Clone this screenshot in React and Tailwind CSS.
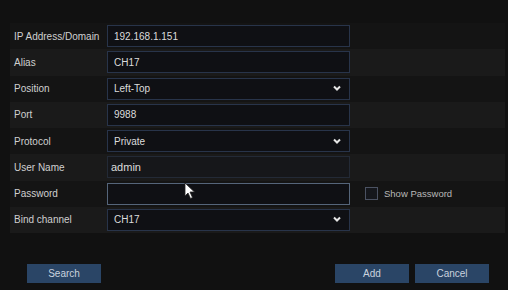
import React from 'react';

const rows = [
  { label: 'IP Address/Domain', value: '192.168.1.151', type: 'text' },
  { label: 'Alias', value: 'CH17', type: 'text' },
  { label: 'Position', value: 'Left-Top', type: 'select' },
  { label: 'Port', value: '9988', type: 'text' },
  { label: 'Protocol', value: 'Private', type: 'select' },
  { label: 'User Name', value: 'admin', type: 'plain' },
  { label: 'Password', value: '', type: 'password' },
  { label: 'Bind channel', value: 'CH17', type: 'select' },
];

const Chevron = () => (
  <svg width="10" height="7" viewBox="0 0 10 7" className="ml-auto mr-[7px]">
    <path d="M2 1.5 L5 4.5 L8 1.5" stroke="#e6e6e6" strokeWidth="2" fill="none" />
  </svg>
);

const Cursor = () => (
  <svg width="12" height="18" viewBox="0 0 12 18" className="absolute left-[184px] top-[182px]">
    <path d="M1 1 L1 14 L4 11 L6.5 16.5 L8.5 15.5 L6 10 L10.5 10 Z" fill="#ffffff" stroke="#222" strokeWidth="0.8" />
  </svg>
);

const App = () => {
  return (
    <div className="relative w-[508px] h-[290px] bg-[#111111] font-['Liberation_Sans',Arial,sans-serif] text-[10px] overflow-hidden">
      <div className="pt-[23px] pl-[10px] pr-[3px]">
        {rows.map((row, i) => (
          <div
            key={row.label}
            className={`flex items-center h-[26.25px] ${i % 2 === 0 ? 'bg-[#141414]' : 'bg-[#1a1a1a]'}`}
          >
            <div className="w-[97px] pl-[4px] text-[#d0d0d0]">{row.label}</div>
            <div
              className={`w-[243px] h-[22px] flex items-center ${
                row.type === 'plain' ? 'pl-[3px] text-[11px] bg-[#16171a] border-[#232a36]' : 'pl-[6px] bg-[#0f1014]'
              } border ${
                row.type === 'password' ? 'border-[#55657a]' : row.type === 'plain' ? '' : 'border-[#28344a]'
              } text-[#dcdcdc]`}
            >
              <span>{row.value}</span>
              {row.type === 'select' && <Chevron />}
            </div>
            {row.type === 'password' && (
              <div className="flex items-center ml-[15px] gap-[6px]">
                <div className="w-[13px] h-[13px] border border-[#4b5262] bg-[#15171c]" />
                <span className="text-[#b8b8b8] text-[9.5px]">Show Password</span>
              </div>
            )}
          </div>
        ))}
      </div>

      <div className="flex items-center mt-[31px] pl-[27px] pr-[19px]">
        <button className="w-[74px] h-[19px] bg-[#2a4566] text-[#c9d2de] text-[10px]">Search</button>
        <div className="flex-1" />
        <button className="w-[74px] h-[19px] bg-[#2a4566] text-[#c9d2de] text-[10px]">Add</button>
        <button className="w-[74px] h-[19px] ml-[6px] bg-[#2a4566] text-[#c9d2de] text-[10px]">Cancel</button>
      </div>

      <Cursor />
    </div>
  );
};

export default App;
